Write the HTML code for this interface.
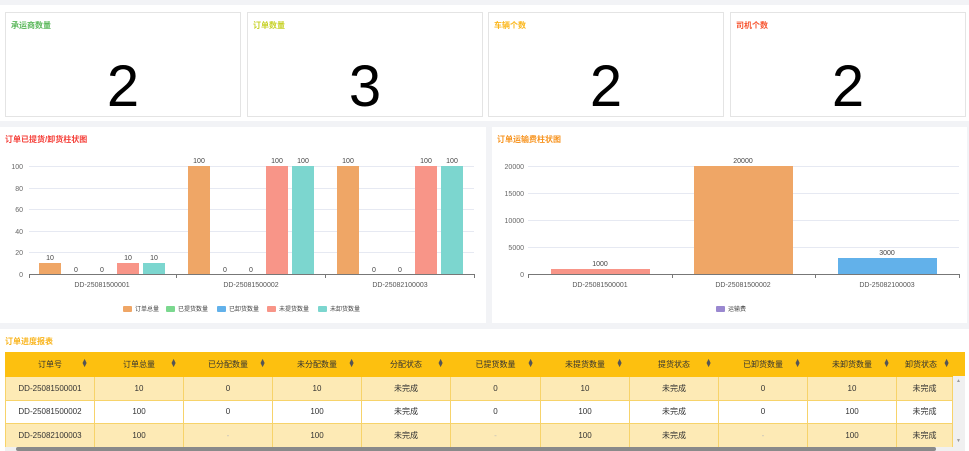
<!DOCTYPE html>
<html><head><meta charset="utf-8"><style>
*{margin:0;padding:0;box-sizing:border-box}
body{width:969px;height:451px;overflow:hidden;background:#f2f3f6;font-family:"Liberation Sans","Noto Sans CJK SC",sans-serif;position:relative}
.a{position:absolute}
.card{position:absolute;top:12px;height:105px;width:236px;border:1px solid #e4e4e4;background:#fff}
.card .t{position:absolute;left:5px;top:7px;font-size:8px;font-weight:bold}
.card .n{position:absolute;left:0;right:0;top:45px;text-align:center;font-size:58px;line-height:58px;color:#000;font-family:"Liberation Sans",sans-serif}
.ct{font-size:8px;font-weight:bold}
table{border-collapse:collapse;table-layout:fixed;font-size:8px;color:#333}
td,th{text-align:center;border:1px solid #f7d36a;height:23.5px;white-space:nowrap;overflow:hidden}
th{background:#fdc00f;font-weight:normal;border-color:#fdc00f;position:relative;height:24px}
th span{position:absolute;right:6px;top:7px;font-size:7px;line-height:4px;color:#555}
th.l{text-align:left;padding-left:8px}
th.l span{right:2px}
tr.y td{background:#fdeab5}
tr.w td{background:#fff}
.g{color:#bbb}
</style></head><body>
<div class="a" style="left:0;top:5px;width:969px;height:116px;background:#fff"></div>
<div class="card" style="left:5px"><div class="t" style="color:#5cb85c">承运商数量</div><div class="n">2</div></div>
<div class="card" style="left:247px"><div class="t" style="color:#c8d22a">订单数量</div><div class="n">3</div></div>
<div class="card" style="left:488px"><div class="t" style="color:#fbb61a">车辆个数</div><div class="n">2</div></div>
<div class="card" style="left:730px"><div class="t" style="color:#f7542f">司机个数</div><div class="n">2</div></div>

<div class="a" style="left:0;top:127px;width:486px;height:196px;background:#fff"></div>
<div class="a" style="left:492px;top:127px;width:475px;height:196px;background:#fff"></div>
<div class="a ct" style="left:5px;top:134px;color:#f5403a">订单已提货/卸货柱状图</div>
<div class="a ct" style="left:497px;top:134px;color:#f7931e">订单运输费柱状图</div>

<svg class="a" style="left:0;top:0" width="969" height="451" font-family="Liberation Sans,Noto Sans CJK SC,sans-serif">
<g stroke="#e6e9f2" stroke-width="1">
<line x1="29" x2="474" y1="166.5" y2="166.5"/><line x1="29" x2="474" y1="188.5" y2="188.5"/><line x1="29" x2="474" y1="209.5" y2="209.5"/><line x1="29" x2="474" y1="231.5" y2="231.5"/><line x1="29" x2="474" y1="252.5" y2="252.5"/>
<line x1="528" x2="959" y1="166.5" y2="166.5"/><line x1="528" x2="959" y1="193.5" y2="193.5"/><line x1="528" x2="959" y1="220.5" y2="220.5"/><line x1="528" x2="959" y1="247.5" y2="247.5"/>
</g>
<g stroke="#777"><line x1="29" x2="474" y1="274.5" y2="274.5"/><line x1="29.5" x2="29.5" y1="274" y2="278"/><line x1="176.5" x2="176.5" y1="274" y2="278"/><line x1="325.5" x2="325.5" y1="274" y2="278"/><line x1="474.5" x2="474.5" y1="274" y2="278"/>
<line x1="528" x2="959" y1="274.5" y2="274.5"/><line x1="528.5" x2="528.5" y1="274" y2="278"/><line x1="672.5" x2="672.5" y1="274" y2="278"/><line x1="815.5" x2="815.5" y1="274" y2="278"/><line x1="959.5" x2="959.5" y1="274" y2="278"/></g>
<g font-size="7" fill="#666" text-anchor="end">
<text x="23" y="169">100</text><text x="23" y="191">80</text><text x="23" y="212">60</text><text x="23" y="234">40</text><text x="23" y="255">20</text><text x="23" y="277">0</text>
<text x="524" y="169">20000</text><text x="524" y="196">15000</text><text x="524" y="223">10000</text><text x="524" y="250">5000</text><text x="524" y="277">0</text>
</g>
<g font-size="7" fill="#555" text-anchor="middle">
<text x="102" y="287">DD-25081500001</text><text x="251" y="287">DD-25081500002</text><text x="400" y="287">DD-25082100003</text>
<text x="600" y="287">DD-25081500001</text><text x="743" y="287">DD-25081500002</text><text x="887" y="287">DD-25082100003</text>
</g>
<rect x="39" y="263" width="22" height="11" fill="#efa666"/><rect x="117" y="263" width="22" height="11" fill="#f89588"/><rect x="143" y="263" width="22" height="11" fill="#7cd6cf"/>
<rect x="188" y="166" width="22" height="108" fill="#efa666"/><rect x="266" y="166" width="22" height="108" fill="#f89588"/><rect x="292" y="166" width="22" height="108" fill="#7cd6cf"/>
<rect x="337" y="166" width="22" height="108" fill="#efa666"/><rect x="415" y="166" width="22" height="108" fill="#f89588"/><rect x="441" y="166" width="22" height="108" fill="#7cd6cf"/>
<g font-size="7" fill="#444" text-anchor="middle">
<text x="50" y="260">10</text><text x="76" y="272">0</text><text x="102" y="272">0</text><text x="128" y="260">10</text><text x="154" y="260">10</text>
<text x="199" y="163">100</text><text x="225" y="272">0</text><text x="251" y="272">0</text><text x="277" y="163">100</text><text x="303" y="163">100</text>
<text x="348" y="163">100</text><text x="374" y="272">0</text><text x="400" y="272">0</text><text x="426" y="163">100</text><text x="452" y="163">100</text>
<text x="600" y="266">1000</text><text x="743" y="163">20000</text><text x="887" y="255">3000</text>
</g>
<rect x="551" y="269" width="99" height="5" fill="#f89588"/><rect x="694" y="166" width="99" height="108" fill="#efa666"/><rect x="838" y="258" width="99" height="16" fill="#62b1ea"/>
<g font-size="6" fill="#444">
<rect x="123" y="306" width="9" height="6" rx="1" fill="#efa666"/><text x="135" y="311">订单总量</text>
<rect x="166" y="306" width="9" height="6" rx="1" fill="#7bd88f"/><text x="178" y="311">已提货数量</text>
<rect x="217" y="306" width="9" height="6" rx="1" fill="#62b1ea"/><text x="229" y="311">已卸货数量</text>
<rect x="267" y="306" width="9" height="6" rx="1" fill="#f89588"/><text x="279" y="311">未提货数量</text>
<rect x="318" y="306" width="9" height="6" rx="1" fill="#7cd6cf"/><text x="330" y="311">未卸货数量</text>
<rect x="716" y="306" width="9" height="6" rx="1" fill="#9a88d0"/><text x="728" y="311">运输费</text>
</g>
</svg>

<div class="a" style="left:0;top:329px;width:969px;height:122px;background:#fff"></div>
<div class="a ct" style="left:5px;top:336px;color:#f9b41c">订单进度报表</div>
<div class="a" style="left:5px;top:352px;width:960px;height:24px;background:#fdc00f"></div>
<table class="a" style="left:5px;top:352px;width:947px">
<colgroup><col style="width:89px"><col style="width:89px"><col style="width:89px"><col style="width:89px"><col style="width:89px"><col style="width:90px"><col style="width:89px"><col style="width:89px"><col style="width:89px"><col style="width:89px"><col style="width:56px"></colgroup>
<tr><th>订单号<span>▲<br>▼</span></th><th>订单总量<span>▲<br>▼</span></th><th>已分配数量<span>▲<br>▼</span></th><th>未分配数量<span>▲<br>▼</span></th><th>分配状态<span>▲<br>▼</span></th><th>已提货数量<span>▲<br>▼</span></th><th>未提货数量<span>▲<br>▼</span></th><th>提货状态<span>▲<br>▼</span></th><th>已卸货数量<span>▲<br>▼</span></th><th>未卸货数量<span>▲<br>▼</span></th><th class="l">卸货状态<span>▲<br>▼</span></th></tr>
<tr class="y"><td>DD-25081500001</td><td>10</td><td>0</td><td>10</td><td>未完成</td><td>0</td><td>10</td><td>未完成</td><td>0</td><td>10</td><td>未完成</td></tr>
<tr class="w"><td>DD-25081500002</td><td>100</td><td>0</td><td>100</td><td>未完成</td><td>0</td><td>100</td><td>未完成</td><td>0</td><td>100</td><td>未完成</td></tr>
<tr class="y"><td>DD-25082100003</td><td>100</td><td class="g">-</td><td>100</td><td>未完成</td><td class="g">-</td><td>100</td><td>未完成</td><td class="g">-</td><td>100</td><td>未完成</td></tr>
</table>
<div class="a" style="left:953px;top:376px;width:12px;height:71px;background:#f0f0f0"></div>
<div class="a" style="left:956px;top:378px;font-size:5px;color:#999">▲</div>
<div class="a" style="left:956px;top:438px;font-size:5px;color:#999">▼</div>
<div class="a" style="left:5px;top:447px;width:960px;height:4px;background:#f0f0f0"></div>
<div class="a" style="left:16px;top:447px;width:920px;height:4px;background:#8a8a8a;border-radius:2px"></div>
</body></html>
